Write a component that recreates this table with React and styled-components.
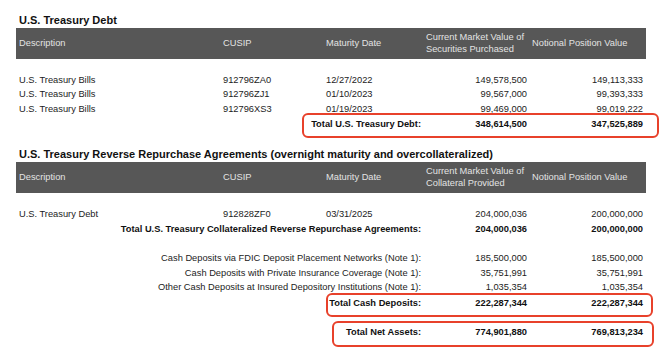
import React from 'react'
import styled, { createGlobalStyle } from "styled-components";

const GlobalStyle = createGlobalStyle`
  body {
    margin: 0;
    background: #ffffff;
    font-family: "Liberation Sans", Arial, sans-serif;
    color: #1c1c1c;
  }
`;

const COLS = "207px 103px 100px 106px 114px";
const TOTAL_COLS = "410px 106px 114px";

const treasuryRows = [
    { desc: 'U.S. Treasury Bills', cusip: '912796ZA0', date: '12/27/2022', value: '149,578,500', notional: '149,113,333' },
    { desc: 'U.S. Treasury Bills', cusip: '912796ZJ1', date: '01/10/2023', value: '99,567,000', notional: '99,393,333' },
    { desc: 'U.S. Treasury Bills', cusip: '912796XS3', date: '01/19/2023', value: '99,469,000', notional: '99,019,222' },
];

const repoRows = [
    { desc: 'U.S. Treasury Debt', cusip: '912828ZF0', date: '03/31/2025', value: '204,000,036', notional: '200,000,000' },
];

const cashRows = [
    { label: 'Cash Deposits via FDIC Deposit Placement Networks (Note 1):', value: '185,500,000', notional: '185,500,000' },
    { label: 'Cash Deposits with Private Insurance Coverage (Note 1):', value: '35,751,991', notional: '35,751,991' },
    { label: 'Other Cash Deposits at Insured Depository Institutions (Note 1):', value: '1,035,354', notional: '1,035,354' },
];

function Header({ valueLabel })
{
    return (
        <HeaderBar>
            <HeaderCell $pl={3}>Description</HeaderCell>
            <HeaderCell>CUSIP</HeaderCell>
            <HeaderCell>Maturity Date</HeaderCell>
            <HeaderCell>Current Market Value of<br />{valueLabel}</HeaderCell>
            <HeaderCell>Notional Position Value</HeaderCell>
        </HeaderBar>
    );
}

function TotalLine({ label, value, notional, box, mt })
{
    return (
        <TotalRow $mt={mt}>
            {box && <Highlight $left={box.left} $top={box.top} $width={box.width} $height={box.height} />}
            <LabelCell>{label}</LabelCell>
            <ValueCell $pr={5}>{value}</ValueCell>
            <ValueCell $pr={3}>{notional}</ValueCell>
        </TotalRow>
    );
}

export default function App()
{
    return (
        <Page>
            <GlobalStyle />
            <SectionTitle>U.S. Treasury Debt</SectionTitle>
            <Header valueLabel="Securities Purchased" />
            <Body>
                {treasuryRows.map((r, i) => (
                    <Row key={i}>
                        <Cell $pl={3}>{r.desc}</Cell>
                        <Cell>{r.cusip}</Cell>
                        <Cell>{r.date}</Cell>
                        <ValueCell $pr={5}>{r.value}</ValueCell>
                        <ValueCell $pr={3}>{r.notional}</ValueCell>
                    </Row>
                ))}
                <TotalLine
                    label="Total U.S. Treasury Debt:"
                    value="348,614,500"
                    notional="347,525,889"
                    box={{ left: 286, top: -4, width: 357, height: 25 }}
                />
            </Body>

            <SectionTitle $mt={15.5}>U.S. Treasury Reverse Repurchase Agreements (overnight maturity and overcollateralized)</SectionTitle>
            <Header valueLabel="Collateral Provided" />
            <Body>
                {repoRows.map((r, i) => (
                    <Row key={i}>
                        <Cell $pl={3}>{r.desc}</Cell>
                        <Cell>{r.cusip}</Cell>
                        <Cell>{r.date}</Cell>
                        <ValueCell $pr={5}>{r.value}</ValueCell>
                        <ValueCell $pr={3}>{r.notional}</ValueCell>
                    </Row>
                ))}
                <TotalLine
                    label="Total U.S. Treasury Collateralized Reverse Repurchase Agreements:"
                    value="204,000,036"
                    notional="200,000,000"
                />
                {cashRows.map((r, i) => (
                    <NoteRow key={i} $mt={i === 0 ? 14.8 : 0}>
                        <LabelCell>{r.label}</LabelCell>
                        <ValueCell $pr={5}>{r.value}</ValueCell>
                        <ValueCell $pr={3}>{r.notional}</ValueCell>
                    </NoteRow>
                ))}
                <TotalLine
                    mt={1.2}
                    label="Total Cash Deposits:"
                    value="222,287,344"
                    notional="222,287,344"
                    box={{ left: 310, top: -3, width: 327, height: 24.5 }}
                />
                <TotalLine
                    mt={14.4}
                    label="Total Net Assets:"
                    value="774,901,880"
                    notional="769,813,234"
                    box={{ left: 316, top: -4, width: 322, height: 26 }}
                />
            </Body>
        </Page>
    );
}

const Page = styled.div`
    padding: 12.7px 0 20px 16px;
    width: 630px;
`;

const SectionTitle = styled.h2`
    margin: ${p => p.$mt || 0}px 0 1px 0;
    padding-left: 3px;
    font-size: 11px;
    line-height: 14px;
    font-weight: bold;
    color: #111111;
    white-space: nowrap;
`;

const HeaderBar = styled.div`
    display: grid;
    grid-template-columns: ${COLS};
    align-items: center;
    height: 31px;
    background-color: #575757;
    color: #e3e3e3;
    font-size: 9.3px;
    line-height: 12.5px;
`;

const HeaderCell = styled.div`
    padding-left: ${p => p.$pl || 0}px;
    white-space: nowrap;
`;

const Body = styled.div`
    padding-top: 14.2px;
    font-size: 9.3px;
`;

const Row = styled.div`
    display: grid;
    grid-template-columns: ${COLS};
    height: 14.6px;
    line-height: 14.6px;
    margin-top: ${p => p.$mt || 0}px;
`;

const NoteRow = styled(Row)`
    grid-template-columns: ${TOTAL_COLS};
`;

const TotalRow = styled(NoteRow)`
    position: relative;
    font-weight: bold;
    color: #111111;

    & > div {
        position: relative;
        z-index: 1;
    }
`;

const Cell = styled.div`
    padding-left: ${p => p.$pl || 0}px;
    white-space: nowrap;
`;

const ValueCell = styled.div`
    text-align: right;
    padding-right: ${p => p.$pr || 0}px;
    white-space: nowrap;
`;

const LabelCell = styled.div`
    text-align: right;
    padding-right: 5px;
    white-space: nowrap;
`;

const Highlight = styled.span`
    position: absolute;
    left: ${p => p.$left}px;
    top: ${p => p.$top}px;
    width: ${p => p.$width}px;
    height: ${p => p.$height}px;
    box-sizing: border-box;
    background: #ffffff;
    border: 2.5px solid #e8412b;
    border-radius: 6px;
    z-index: 0;
`;
